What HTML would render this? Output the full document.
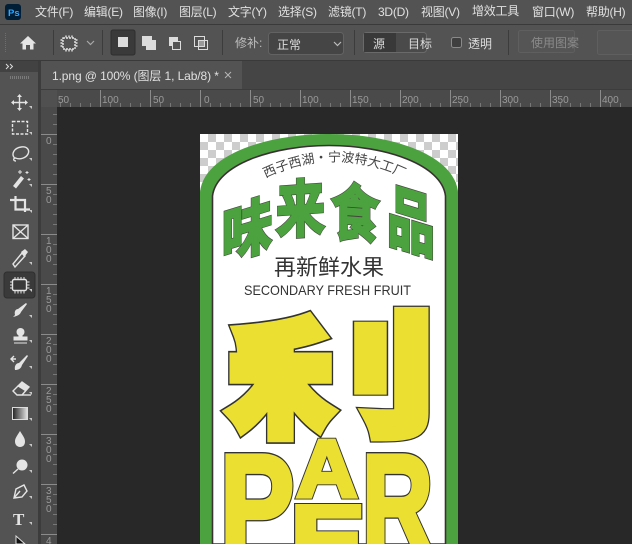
<!DOCTYPE html>
<html><head><meta charset="utf-8"><style>
html,body{margin:0;padding:0;background:#282828;overflow:hidden}
svg{display:block}
.m{font:12px "Liberation Sans","Noto Sans CJK SC",sans-serif;fill:#e0e0e0;letter-spacing:-.25px}
.o{font:12px "Liberation Sans","Noto Sans CJK SC",sans-serif;fill:#dcdcdc}
.r{font:10px "Liberation Sans",sans-serif;fill:#9a9a9a}
.i{fill:none;stroke:#e4e4e4;stroke-width:1.4}
.f{fill:#e4e4e4}
.cn{font-family:"Noto Sans CJK SC",sans-serif}
.la{font-family:"Liberation Sans",sans-serif;font-weight:700}
</style></head><body>
<svg width="632" height="544" viewBox="0 0 632 544" xmlns="http://www.w3.org/2000/svg">
<defs>
<pattern id="ck" x="200" y="134" width="16" height="16" patternUnits="userSpaceOnUse">
<rect width="16" height="16" fill="#fff"/><rect x="8" width="8" height="8" fill="#cdcdcd"/><rect y="8" width="8" height="8" fill="#cdcdcd"/>
</pattern>
<path id="arc" d="M261,180 Q334,143 408,180"/>
<linearGradient id="g"><stop offset="0" stop-color="#222"/><stop offset="1" stop-color="#e4e4e4"/></linearGradient>
<clipPath id="doc"><rect x="200" y="134" width="258" height="410"/></clipPath>
</defs>

<!-- chrome -->
<rect width="632" height="544" fill="#282828"/>
<rect width="632" height="24" fill="#535353"/>
<rect y="24" width="632" height="1" fill="#3a3a3a"/>
<rect y="25" width="632" height="35" fill="#535353"/>
<rect y="60" width="632" height="1" fill="#3a3a3a"/>
<rect y="61" width="632" height="29" fill="#454545"/>
<rect x="41" y="61" width="201" height="29" fill="#535353"/>
<rect x="0" y="61" width="38" height="483" fill="#535353"/>
<rect x="0" y="61" width="38" height="11" fill="#424242"/>
<rect x="38" y="61" width="3" height="483" fill="#3c3c3c"/>
<rect x="41" y="90" width="591" height="17" fill="#4a4a4a"/>
<rect x="41" y="90" width="16" height="454" fill="#4a4a4a"/>
<rect x="41" y="90" width="16" height="17" fill="#505050"/>
<rect x="41" y="89" width="591" height="1" fill="#3c3c3c"/>

<!-- Ps logo -->
<rect x="5" y="4" width="16" height="16" rx="3" fill="#001e36"/>
<text x="8" y="16" style="font:bold 9.500px 'Liberation Sans',sans-serif;fill:#31a8ff">Ps</text>

<!-- menu -->
<text class="m" x="35" y="16">文件(F)</text>
<text class="m" x="84" y="16">编辑(E)</text>
<text class="m" x="133" y="16">图像(I)</text>
<text class="m" x="179" y="16">图层(L)</text>
<text class="m" x="228" y="16">文字(Y)</text>
<text class="m" x="278" y="16">选择(S)</text>
<text class="m" x="328" y="16">滤镜(T)</text>
<text class="m" x="378" y="16">3D(D)</text>
<text class="m" x="421" y="16">视图(V)</text>
<text class="m" x="472" y="15">增效工具</text>
<text class="m" x="532" y="16">窗口(W)</text>
<text class="m" x="586" y="16">帮助(H)</text>

<!-- options bar -->
<path d="M5.500,33V52" stroke="#6e6e6e" stroke-dasharray="1 1"/>
<path d="M28,36 L20,43.500 H22.500 V49.500 H26 V45 H30 V49.500 H33.500 V43.500 H36 Z" class="f"/>
<rect x="53" y="30" width="1" height="25" fill="#3c3c3c"/>
<rect x="102" y="30" width="1" height="25" fill="#3c3c3c"/>
<rect x="222" y="30" width="1" height="25" fill="#3c3c3c"/>
<rect x="354" y="30" width="1" height="25" fill="#3c3c3c"/>
<rect x="508" y="30" width="1" height="25" fill="#3c3c3c"/>
<rect x="63" y="38" width="12" height="11" class="i" stroke-dasharray="2 1"/>
<g class="i" stroke-width="1"><path d="M66,35.500v2M69,35.500v2M72,35.500v2M66,49v2.500M69,49v2.500M72,49v2.500M60.500,40h2M60.500,43h2M60.500,46h2M75.500,40h2M75.500,43h2M75.500,46h2"/></g>
<path d="M87,41l3.500,3.500L94,41" fill="none" stroke="#a8a8a8" stroke-width="1.200"/>
<rect x="111" y="30" width="24" height="25" rx="2" fill="#3a3a3a" stroke="#2e2e2e"/>
<rect x="118" y="37" width="10" height="10" fill="#dcdcdc"/>
<rect x="142" y="36" width="10" height="10" fill="#dcdcdc"/><rect x="146" y="40" width="10" height="10" fill="#dcdcdc"/>
<rect x="169" y="37" width="9" height="9" fill="#dcdcdc"/><rect x="172.500" y="41.500" width="8" height="8" fill="#535353" stroke="#dcdcdc"/>
<rect x="194.500" y="36.500" width="10" height="10" fill="none" stroke="#dcdcdc"/><rect x="198.500" y="40.500" width="9" height="9" fill="none" stroke="#dcdcdc"/><rect x="199" y="41" width="5" height="5" fill="#9a9a9a"/>
<text class="o" x="235" y="47" style="fill:#bdbdbd">修补:</text>
<rect x="268.500" y="32.500" width="75" height="22" rx="3" fill="#454545" stroke="#626262"/>
<text class="o" x="277" y="49">正常</text>
<path d="M334,42l3.500,3.500L341,42" fill="none" stroke="#bdbdbd" stroke-width="1.200"/>
<rect x="363.500" y="32.500" width="63" height="20" rx="3" fill="#4a4a4a" stroke="#6a6a6a"/>
<rect x="364" y="33" width="32" height="19" fill="#393939"/>
<text class="o" x="373" y="48">源</text>
<text class="o" x="408" y="48">目标</text>
<rect x="451.500" y="37.500" width="10" height="10" rx="2" fill="#3f3f3f" stroke="#8a8a8a"/>
<text class="o" x="468" y="48">透明</text>
<rect x="518.500" y="30.500" width="56" height="22" rx="2" fill="#555" stroke="#5f5f5f"/>
<text class="o" x="531" y="47" style="fill:#8a8a8a">使用图案</text>
<rect x="597.500" y="30.500" width="40" height="24" rx="2" fill="#555" stroke="#5f5f5f"/>

<!-- tab -->
<text x="52" y="80" style="font:12px 'Liberation Sans','Noto Sans CJK SC',sans-serif;fill:#e0e0e0;letter-spacing:-.1px">1.png @ 100% (图层 1, Lab/8) *</text>
<path d="M225,72l6,6M231,72l-6,6" stroke="#b5b5b5"/>
<path d="M6,64l2.500,2.500L6,69M10,64l2.500,2.500L10,69" fill="none" stroke="#dcdcdc"/>
<path d="M10,77.500H29" stroke="#7a7a7a" stroke-width="3" stroke-dasharray="1 1"/>

<!-- rulers -->
<g stroke="#8b8b8b" stroke-width="1">
<path d="M100.500,90V107M150.500,90V107M200.500,90V107M250.500,90V107M300.500,90V107M350.500,90V107M400.500,90V107M450.500,90V107M500.500,90V107M550.500,90V107M600.500,90V107"/>
<path d="M41,134.500H57M41,184.500H57M41,234.500H57M41,284.500H57M41,334.500H57M41,384.500H57M41,434.500H57M41,484.500H57M41,534.500H57"/>
</g>
<path d="M60.500,103V107M70.500,103V107M80.500,103V107M90.500,103V107M110.500,103V107M120.500,103V107M130.500,103V107M140.500,103V107M160.500,103V107M170.500,103V107M180.500,103V107M190.500,103V107M210.500,103V107M220.500,103V107M230.500,103V107M240.500,103V107M260.500,103V107M270.500,103V107M280.500,103V107M290.500,103V107M310.500,103V107M320.500,103V107M330.500,103V107M340.500,103V107M360.500,103V107M370.500,103V107M380.500,103V107M390.500,103V107M410.500,103V107M420.500,103V107M430.500,103V107M440.500,103V107M460.500,103V107M470.500,103V107M480.500,103V107M490.500,103V107M510.500,103V107M520.500,103V107M530.500,103V107M540.500,103V107M560.500,103V107M570.500,103V107M580.500,103V107M590.500,103V107M610.500,103V107M620.500,103V107" stroke="#777"/>
<path d="M53,114.500H57M53,124.500H57M53,144.500H57M53,154.500H57M53,164.500H57M53,174.500H57M53,194.500H57M53,204.500H57M53,214.500H57M53,224.500H57M53,244.500H57M53,254.500H57M53,264.500H57M53,274.500H57M53,294.500H57M53,304.500H57M53,314.500H57M53,324.500H57M53,344.500H57M53,354.500H57M53,364.500H57M53,374.500H57M53,394.500H57M53,404.500H57M53,414.500H57M53,424.500H57M53,444.500H57M53,454.500H57M53,464.500H57M53,474.500H57M53,494.500H57M53,504.500H57M53,514.500H57M53,524.500H57" stroke="#777"/>
<g class="r">
<text x="58" y="103">50</text><text x="102" y="103">100</text><text x="153" y="103">50</text><text x="204" y="103">0</text>
<text x="253" y="103">50</text><text x="302" y="103">100</text><text x="352" y="103">150</text><text x="402" y="103">200</text>
<text x="452" y="103">250</text><text x="502" y="103">300</text><text x="552" y="103">350</text><text x="602" y="103">400</text>
<text x="46" y="144">0</text>
<text x="46" y="194">5</text><text x="46" y="203">0</text>
<text x="46" y="244">1</text><text x="46" y="253">0</text><text x="46" y="262">0</text>
<text x="46" y="294">1</text><text x="46" y="303">5</text><text x="46" y="312">0</text>
<text x="46" y="344">2</text><text x="46" y="353">0</text><text x="46" y="362">0</text>
<text x="46" y="394">2</text><text x="46" y="403">5</text><text x="46" y="412">0</text>
<text x="46" y="444">3</text><text x="46" y="453">0</text><text x="46" y="462">0</text>
<text x="46" y="494">3</text><text x="46" y="503">5</text><text x="46" y="512">0</text>
<text x="46" y="544">4</text>
</g>

<!-- tools -->
<rect x="4" y="272" width="31" height="26" rx="3" fill="#3a3a3a" stroke="#2f2f2f"/>
<path d="M19.500,95V110M12,102.500H27" class="i" stroke-width="2"/>
<path d="M19.500,94l-2.500,3h5zM19.500,111l-2.500,-3h5zM11,102.500l3,-2.500v5zM28,102.500l-3,-2.500v5z" class="f"/>
<rect x="12.500" y="121.500" width="15" height="12.500" class="i" stroke-dasharray="3 1.500"/>
<path d="M14.500,158C11,154 14,148 21,147C27,146 30,150 28,154C26,158 20,160 15.500,158C13,158 13,161 16,161" class="i"/>
<path d="M13,186L21,176l3,2.500L16,188.500Z" class="f"/>
<path d="M20,170v4M18,172h4M27,171v3M25.500,172.500h3M29,178v3M27.500,179.500h3" stroke="#e4e4e4"/>
<path d="M10,200H25V212M15.500,196V209.500H30" fill="none" stroke="#e4e4e4" stroke-width="2.200"/>
<rect x="13" y="225" width="15" height="13.500" class="i" stroke-width="1.500"/>
<path d="M13,225L28,238.500M28,225L13,238.500" class="i"/>
<path d="M13,264L22,253l3,3L15,267Z" class="i"/>
<path d="M21,252L25,249l3,3l-3,4l-1,1Z" class="f"/>
<rect x="12.500" y="279.500" width="14" height="11" rx="1.500" class="i"/>
<path d="M15,277v2.500M18,277v2.500M21,277v2.500M24,277v2.500M15,291v2.500M18,291v2.500M21,291v2.500M24,291v2.500M10,282h2.500M10,285h2.500M10,288h2.500M27,282h2.500M27,285h2.500M27,288h2.500" stroke="#e4e4e4"/>
<path d="M15,315C14,311 16,309 18,309L26,303L27,304L21,312C20,315 17,316 13,317Z" class="f"/>
<circle cx="20.500" cy="332" r="4" class="f"/>
<path d="M19,334h3v3h5v3H14v-3h5zM14,343h13" class="f" stroke="#e4e4e4"/>
<path d="M15,370C14,365 17,363 19,363L27,355L28,356L22,365C21,369 18,370 15,370Z" class="f"/>
<path d="M11,359h5M14,356l-3,3l3,3" class="i"/>
<path d="M13,391L22,382L29,387L22,395H17Z" class="i"/><path d="M17,386L22,382L29,387L25,391Z" class="f"/><path d="M22,395H31" class="i"/>
<rect x="12.500" y="407.500" width="15" height="12" fill="url(#g)" stroke="#dcdcdc"/>
<path d="M20,431C17,436 15,438 15,441.500C15,445 17.500,447 20,447C23,447 25,445 25,441.500C25,438 23,436 20,431Z" class="f"/>
<circle cx="22" cy="465" r="5.500" class="f"/><path d="M18,469L13,473.500" class="i" stroke-width="1.800"/>
<path d="M14,498L16,489L24,485L27,491L22,497Z" class="i"/><path d="M14,498L20,491" class="i"/>
<text x="13" y="525" style="font:bold 17px 'Liberation Serif',serif;fill:#e4e4e4">T</text>
<path d="M16,536L16,544H25Z" fill="#111" stroke="#dcdcdc"/>
<path d="M32,109v-3h-3zM32,135v-3h-3zM32,161v-3h-3zM32,187v-3h-3zM32,213v-3h-3zM32,265v-3h-3zM32,292v-3h-3zM32,318v-3h-3zM32,343v-3h-3zM32,369v-3h-3zM32,395v-3h-3zM32,421v-3h-3zM32,447v-3h-3zM32,473v-3h-3zM32,499v-3h-3zM32,525v-3h-3z" fill="#c8c8c8"/>

<!-- document -->
<g clip-path="url(#doc)">
<rect x="200" y="134" width="258" height="410" fill="url(#ck)"/>
<path d="M200,544V192C204,154 268,134 329,134C390,134 454,154 458,192V544Z" fill="#4ba23e"/>
<path d="M212.500,544V196C216,165 272,145.500 329,145.500C386,145.500 442,165 445.500,196V544Z" fill="#fff" stroke="#3a3033" stroke-width="1.600"/>
<text style="font-family:'Noto Sans CJK SC',sans-serif;font-size:13px;fill:#444"><textPath href="#arc" startOffset="50%" text-anchor="middle">西子西湖・宁波特大工厂</textPath></text>

<!-- 味来食品 -->
<g class="cn" font-weight="700" stroke-linejoin="miter">
<g fill="#45413f" stroke="#45413f" stroke-width="3">
<text transform="translate(222,260) skewY(-17) scale(.96,1.180)" font-size="52">味</text>
<text transform="translate(276,233) skewY(-4) scale(.94,1.180)" font-size="52">来</text>
<text transform="translate(331,234) skewY(4) scale(.92,1.180)" font-size="52">食</text>
<text transform="translate(387,239) skewY(17) scale(.92,1.320)" font-size="52">品</text>
</g>
<g fill="#4ba23e" stroke="#4ba23e" stroke-width="2">
<text transform="translate(222,260) skewY(-17) scale(.96,1.180)" font-size="52">味</text>
<text transform="translate(276,233) skewY(-4) scale(.94,1.180)" font-size="52">来</text>
<text transform="translate(331,234) skewY(4) scale(.92,1.180)" font-size="52">食</text>
<text transform="translate(387,239) skewY(17) scale(.92,1.320)" font-size="52">品</text>
</g>
</g>
<text x="274" y="275" class="cn" font-size="22" fill="#333">再新鲜水果</text>
<text x="244" y="295" style="font:14px 'Liberation Sans',sans-serif;fill:#333" textLength="167" lengthAdjust="spacingAndGlyphs">SECONDARY FRESH FRUIT</text>

<!-- 利 : 禾 + 丨 + 亅 -->
<g class="cn" font-weight="700" stroke-linejoin="miter" stroke-miterlimit="3">
<g fill="#333" stroke="#333">
<text transform="translate(231,423) scale(.9,1.100)" font-size="110" stroke-width="18">禾</text>
<text transform="translate(330.500,381) scale(1,.75)" font-size="80" stroke-width="25">丨</text>
<text transform="translate(338.500,424) scale(1.300,1.220)" font-size="110" stroke-width="14">亅</text>
</g>
<g fill="#ebdf31" stroke="#ebdf31">
<text transform="translate(231,423) scale(.9,1.100)" font-size="110" stroke-width="15">禾</text>
<text transform="translate(330.500,381) scale(1,.75)" font-size="80" stroke-width="22">丨</text>
<text transform="translate(338.500,424) scale(1.300,1.220)" font-size="110" stroke-width="12">亅</text>
</g>
</g>

<!-- PAPER -->
<g class="la" stroke-linejoin="miter">
<g fill="#333" stroke="#333" stroke-width="6">
<text transform="translate(220,551) scale(1.030,1.280)" font-size="108">P</text>
<text transform="translate(296,497) scale(.97,.93)" font-size="88">A</text>
<text transform="translate(290,572) scale(1.180,1)" font-size="96">E</text>
<text transform="translate(362,551) scale(.91,1.280)" font-size="108">R</text>
</g>
<g fill="#ebdf31" stroke="#ebdf31" stroke-width="4">
<text transform="translate(220,551) scale(1.030,1.280)" font-size="108">P</text>
<text transform="translate(296,497) scale(.97,.93)" font-size="88">A</text>
<text transform="translate(290,572) scale(1.180,1)" font-size="96">E</text>
<text transform="translate(362,551) scale(.91,1.280)" font-size="108">R</text>
</g>
</g>
</g>
</svg>
</body></html>
